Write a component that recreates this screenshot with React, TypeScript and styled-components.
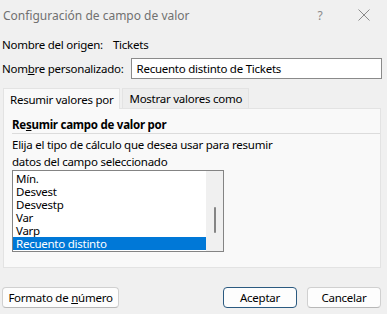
import React from "react";
import styled, { createGlobalStyle } from "styled-components";

const Global = createGlobalStyle`
  html, body { margin: 0; padding: 0; }
  body {
    width: 387px; height: 314px; overflow: hidden;
    background: #f0f0f0;
    font-family: "Noto Sans", "Open Sans", sans-serif;
    font-size: 11.5px; letter-spacing: -0.25px; color: #000;
  }
`;

const Dialog = styled.div`
  width: 387px; height: 314px; box-sizing: border-box;
  display: flex; flex-direction: column;
  background: #f0f0f0;
`;

const TitleBar = styled.div`
  height: 30px; display: flex; align-items: center;
  padding-left: 3px;
`;

const Title = styled.div`
  flex: 1; color: #707070; font-size: 12px; letter-spacing: 0;
`;

const TitleBtn = styled.div<{ $w: number }>`
  width: ${(p) => p.$w}px; height: 30px; display: flex; align-items: center; justify-content: center;
  color: #8a8a8a; font-size: 12px;
`;

const Body = styled.div`
  padding: 0 5px 0 2px; display: flex; flex-direction: column;
`;

const FieldRow = styled.div<{ $h: number; $gap: number }>`
  height: ${(p) => p.$h}px; display: flex; align-items: center; gap: ${(p) => p.$gap}px;
`;

const Label = styled.span`
  white-space: nowrap;
`;

const U = styled.span`text-decoration: underline;`;

const TextInput = styled.div`
  flex: 1; height: 21px; box-sizing: border-box;
  border: 1px solid #8a8a8a; background: #fff;
  display: flex; align-items: center; padding-left: 5px;
`;

const Tabs = styled.div`
  margin-top: 9px; display: flex; align-items: flex-end; height: 20px;
  padding-left: 1px;
`;

const Tab = styled.div<{ $active?: boolean }>`
  height: 20px; box-sizing: border-box; display: flex; align-items: center;
  padding: 0 6px;
  border: 1px solid #e3e3e3; border-bottom: none;
  background: ${(p) => (p.$active ? "#f9f9f9" : "#ededed")};
  margin-left: ${(p) => (p.$active ? "0" : "2px")};
  position: relative; z-index: ${(p) => (p.$active ? 2 : 1)};
  ${(p) => (p.$active ? "margin-bottom: -1px; height: 21px;" : "")}
`;

const Panel = styled.div`
  width: 378px; height: 160px; box-sizing: border-box; margin-left: 1px;
  border: 1px solid #e3e3e3; background: #f9f9f9;
  padding: 7px 0 0 8px; display: flex; flex-direction: column;
`;

const Heading = styled.div`
  font-weight: bold; height: 17px; display: flex; align-items: center;
  border-bottom: 1px solid #dcdcdc;
`;

const Desc = styled.div`
  margin-top: 2px; line-height: 17px;
`;

const ListBox = styled.div`
  width: 212px; height: 82px; box-sizing: border-box;
  border: 1px solid #848484; background: #fff; display: flex;
`;

const Items = styled.div`
  flex: 1; padding-top: 1px; display: flex; flex-direction: column;
`;

const Item = styled.div<{ $sel?: boolean }>`
  height: 13px; line-height: 13px; padding-left: 3px;
  background: ${(p) => (p.$sel ? "#0078d7" : "transparent")};
  color: ${(p) => (p.$sel ? "#fff" : "#000")};
`;

const ScrollTrack = styled.div`
  width: 17px; background: #f0f0f0; display: flex; justify-content: center;
  padding-top: 36px; box-sizing: border-box;
`;

const Thumb = styled.div`
  width: 2px; height: 26px; background: #858585; border-radius: 1px;
`;

const Footer = styled.div`
  margin-top: 19px; display: flex; padding: 0 6px 0 2px; align-items: center;
`;

const Button = styled.div<{ $w: number; $default?: boolean }>`
  width: ${(p) => p.$w}px; height: 21px; box-sizing: border-box;
  display: flex; align-items: center; justify-content: center;
  background: #fdfdfd; border-radius: 4px;
  border: 1px solid ${(p) => (p.$default ? "#2b5a80" : "#d0d0d0")};
  ${(p) => (p.$default ? "" : "border-bottom-color: #b8b8b8;")}
`;

const Spacer = styled.div`flex: 1;`;

export default function App() {
  const items = ["Mín.", "Desvest", "Desvestp", "Var", "Varp", "Recuento distinto"];
  return (
    <Dialog>
      <Global />
      <TitleBar>
        <Title>Configuración de campo de valor</Title>
        <TitleBtn $w={42}>?</TitleBtn>
        <TitleBtn $w={46}>
          <svg width="12" height="12" viewBox="0 0 12 12">
            <path d="M0.5 0.5 L11.5 11.5 M11.5 0.5 L0.5 11.5" stroke="#8a8a8a" strokeWidth="1" fill="none" />
          </svg>
        </TitleBtn>
      </TitleBar>
      <Body>
        <FieldRow $h={28} $gap={10}>
          <Label>Nombre del origen:</Label>
          <Label>Tickets</Label>
        </FieldRow>
        <FieldRow $h={21} $gap={7}>
          <Label>
            Nom<U>b</U>re personalizado:
          </Label>
          <TextInput>Recuento distinto de Tickets</TextInput>
        </FieldRow>
        <Tabs>
          <Tab $active>Resumir valores por</Tab>
          <Tab>Mostrar valores como</Tab>
        </Tabs>
        <Panel>
          <Heading>
            <span>
              Re<U>s</U>umir campo de valor por
            </span>
          </Heading>
          <Desc>
            Elija el tipo de cálculo que desea usar para resumir
            <br />
            datos del campo seleccionado
          </Desc>
          <ListBox>
            <Items>
              {items.map((t, i) => (
                <Item key={t} $sel={i === items.length - 1}>
                  {t}
                </Item>
              ))}
            </Items>
            <ScrollTrack>
              <Thumb />
            </ScrollTrack>
          </ListBox>
        </Panel>
      </Body>
      <Footer>
        <Button $w={117}>
          Formato de&nbsp;<U>n</U>úmero
        </Button>
        <Spacer />
        <Button $w={74} $default>
          Aceptar
        </Button>
        <Button $w={74} style={{ marginLeft: 10 }}>
          Cancelar
        </Button>
      </Footer>
    </Dialog>
  );
}
